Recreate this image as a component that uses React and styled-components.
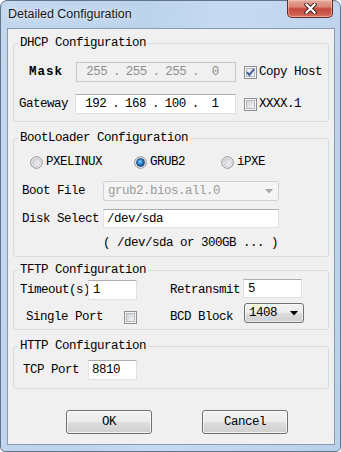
import styled, { createGlobalStyle } from 'styled-components'

const Global = createGlobalStyle`
  html, body { margin:0; padding:0; background:#ffffff; }
  body { width:341px; height:452px; overflow:hidden; }
  * { box-sizing:border-box; }
`

const mono = `font-family:"Liberation Mono","DejaVu Sans Mono",monospace;font-size:12.5px;letter-spacing:-0.5px;`

const Win = styled.div`
  width:341px;height:452px;
  display:flex;flex-direction:column;
  border:1px solid #62748c;
  border-radius:7px 7px 5px 5px;
  background:linear-gradient(100deg,#c3d8ef 0%,#bcd3ec 35%,#c6dbf1 55%,#b9d0ea 100%);
  padding:0 5px 6px 6px;
  color:#000;
`
const TitleBar = styled.div`
  height:27px;display:flex;justify-content:space-between;align-items:flex-start;
`
const TitleText = styled.div`
  font-family:"Liberation Sans",Arial,sans-serif;font-size:12.5px;color:#1a1a1a;
  line-height:27px;padding-left:1px;
  text-shadow:0 0 6px rgba(255,255,255,0.9);
`
const CloseBtn = styled.div`
  width:46px;height:18px;margin-top:-1px;margin-right:2px;
  border:1px solid #6a2a22;border-top:none;
  border-radius:0 0 5px 5px;
  background:linear-gradient(#e7a99c 0%,#d98576 40%,#c34a3c 52%,#cb5a4b 80%,#d7776a 100%);
  box-shadow:inset 0 0 0 1px rgba(255,220,210,0.45);
  display:flex;align-items:center;justify-content:center;
`
const Client = styled.div`
  flex:1;display:flex;flex-direction:column;
  background:#f0f0f0;border:1px solid #8a9bb1;
  padding:7px 5px 0 5px;
`
const Group = styled.fieldset`
  margin:${p => p.$mt || 0}px 0 0 0;
  padding:${p => p.$pt}px 0 ${p => p.$pb}px 0;
  border:1px solid #d5dce3;border-radius:3px;
  min-width:0;
  display:flex;flex-direction:column;
`
const Legend = styled.legend`
  ${mono}
  line-height:14px;padding:0 2px;margin-left:4px;
`
const Row = styled.div`
  display:flex;align-items:center;
  height:${p => p.$h || 20}px;
  margin-top:${p => p.$mt || 0}px;
  padding-left:${p => p.$pl || 0}px;
`
const Label = styled.div`
  ${mono}
  width:${p => p.$w}px;flex:none;
  padding-left:${p => p.$pl || 0}px;
  white-space:nowrap;
  margin-top:${p => p.$dy || 0}px;
  ${p => p.$bold && 'font-weight:bold;letter-spacing:1px;'}
`
const Field = styled.div`
  ${mono}
  width:${p => p.$w}px;height:${p => p.$h || 20}px;flex:none;
  display:flex;align-items:center;
  padding-left:${p => p.$pl || 4}px;
  background:${p => p.$off ? '#f0f0f0' : '#ffffff'};
  color:${p => p.$off ? '#8e8e8e' : '#000'};
  border:1px solid ${p => p.$off ? '#cacaca' : '#dde1e7'};
  border-top-color:${p => p.$off ? '#c2c2c2' : '#abadb3'};
  border-left-color:${p => p.$off ? '#c6c6c6' : '#e2e3ea'};
  margin-right:${p => p.$mr || 0}px;
`
const IpBox = styled(Field)`
  display:grid;grid-template-columns:1fr 0 1fr 0 1fr 0 1fr;padding-left:0;
`
const Octet = styled.span`text-align:center;`
const Dot = styled.span`display:flex;justify-content:center;width:0;`
const Combo = styled.div`
  ${mono}
  width:${p => p.$w}px;height:20px;flex:none;
  display:flex;align-items:center;justify-content:space-between;
  padding:0 5px 0 4px;
  border-radius:3px;
  ${p => p.$off
    ? 'background:#f4f4f4;border:1px solid #d0d0d0;color:#9b9b9b;'
    : 'background:linear-gradient(#f2f2f2 0%,#ebebeb 48%,#dddddd 52%,#cfcfcf 100%);border:1px solid #707070;color:#000;box-shadow:inset 0 0 0 1px rgba(255,255,255,0.6);'}
  margin-top:${p => p.$mt || 0}px;
  align-self:${p => p.$self || 'auto'};
`
const CheckWrap = styled.label`
  ${mono}
  display:flex;align-items:center;gap:2px;
  margin-right:${p => p.$mr || 0}px;
`
const RadioItem = styled.label`
  ${mono}
  display:flex;align-items:center;gap:3px;
  width:${p => p.$w ? p.$w + 'px' : 'auto'};
`
const Hint = styled.div`
  ${mono}
  line-height:14px;
  padding-left:${p => p.$pl}px;
  margin-top:${p => p.$mt}px;
`
const Buttons = styled.div`
  display:flex;gap:50px;padding-left:53px;margin-top:21px;
`
const Button = styled.div`
  ${mono}
  width:86px;height:24px;
  display:flex;align-items:center;justify-content:center;
  border:1px solid #707070;border-radius:3px;
  background:linear-gradient(#f2f2f2 0%,#ebebeb 48%,#dddddd 52%,#cfcfcf 100%);
  box-shadow:inset 0 0 0 1px rgba(255,255,255,0.7);
`

function Check({ on }) {
  return (
    <svg width="13" height="13" viewBox="0 0 13 13">
      <defs>
        <linearGradient id="cbg" x1="0" y1="0" x2="1" y2="1">
          <stop offset="0" stopColor="#cbcfd5" />
          <stop offset="1" stopColor="#f7f7f7" />
        </linearGradient>
      </defs>
      <rect x="0.5" y="0.5" width="12" height="12" fill="#f4f4f4" stroke="#8f8f8f" />
      <rect x="2.5" y="2.5" width="8" height="8" fill={on ? '#eef0f3' : 'url(#cbg)'} stroke="#b4b8be" />
      {on && <path d="M3 6.2 L5.4 9 L10 3" fill="none" stroke="#3d5a9c" strokeWidth="2" />}
    </svg>
  )
}

function Radio({ on }) {
  return (
    <svg width="13" height="13" viewBox="0 0 13 13">
      <defs>
        <linearGradient id="rbg" x1="0" y1="0" x2="1" y2="1">
          <stop offset="0" stopColor="#c9ccd1" />
          <stop offset="1" stopColor="#fbfbfb" />
        </linearGradient>
        <radialGradient id="rsel" cx="0.45" cy="0.4" r="0.6">
          <stop offset="0" stopColor="#8fd9fb" />
          <stop offset="0.5" stopColor="#2a86d0" />
          <stop offset="1" stopColor="#0d3f80" />
        </radialGradient>
      </defs>
      <circle cx="6.5" cy="6.5" r="5.8" fill="#f4f4f4" stroke="#8e8f8f" strokeWidth="1" />
      <circle cx="6.5" cy="6.5" r="4" fill={on ? 'url(#rsel)' : 'url(#rbg)'} stroke={on ? '#1a3e72' : '#c0c3c7'} strokeWidth="0.8" />
    </svg>
  )
}

function Arrow({ c }) {
  return (
    <svg width="8" height="5" viewBox="0 0 8 5">
      <path d="M0 0 H8 L4 4.5 Z" fill={c} />
    </svg>
  )
}

function Ip({ parts, off, w }) {
  return (
    <IpBox $w={w} $off={off}>
      <Octet>{parts[0]}</Octet><Dot>.</Dot>
      <Octet>{parts[1]}</Octet><Dot>.</Dot>
      <Octet>{parts[2]}</Octet><Dot>.</Dot>
      <Octet>{parts[3]}</Octet>
    </IpBox>
  )
}

export default function App() {
  return (
    <>
      <Global />
      <Win>
        <TitleBar>
          <TitleText>Detailed Configuration</TitleText>
          <CloseBtn>
            <svg width="13" height="11" viewBox="0 0 13 11">
              <path d="M2.5 1.5 L10.5 9.5 M10.5 1.5 L2.5 9.5" stroke="#3a1b17" strokeWidth="4" strokeLinecap="square" />
              <path d="M2.5 1.5 L10.5 9.5 M10.5 1.5 L2.5 9.5" stroke="#ffffff" strokeWidth="2.2" strokeLinecap="square" />
            </svg>
          </CloseBtn>
        </TitleBar>
        <Client>
          <Group $pt={12} $pb={7}>
            <Legend>DHCP Configuration</Legend>
            <Row>
              <Label $w={62} $pl={15} $bold>Mask</Label>
              <Ip w={160} off parts={['255', '255', '255', '0']} />
              <CheckWrap style={{ marginLeft: 8 }}><Check on />Copy Host</CheckWrap>
            </Row>
            <Row $mt={12}>
              <Label $w={61} $pl={5}>Gateway</Label>
              <Ip w={161} parts={['192', '168', '100', '1']} />
              <CheckWrap style={{ marginLeft: 8 }}><Check />XXXX.1</CheckWrap>
            </Row>
          </Group>

          <Group $mt={9} $pt={9} $pb={6}>
            <Legend>BootLoader Configuration</Legend>
            <Row $h={16} $pl={16}>
              <RadioItem $w={104}><Radio />PXELINUX</RadioItem>
              <RadioItem $w={87}><Radio on />GRUB2</RadioItem>
              <RadioItem><Radio />iPXE</RadioItem>
            </Row>
            <Row $mt={11}>
              <Label $w={89} $pl={8}>Boot File</Label>
              <Combo $w={176} $off>grub2.bios.all.0<Arrow c="#a8a8a8" /></Combo>
            </Row>
            <Row $mt={8} $h={19}>
              <Label $w={89} $pl={8}>Disk Select</Label>
              <Field $w={176} $h={19} $pl={3}>/dev/sda</Field>
            </Row>
            <Hint $pl={89} $mt={8}>( /dev/sda or 300GB ... )</Hint>
          </Group>

          <Group $mt={6} $pt={3} $pb={3}>
            <Legend>TFTP Configuration</Legend>
            <Row>
              <Label $w={74} $pl={6}>Timeout(s)</Label>
              <Field $w={49} $mr={33}>1</Field>
              <Label $w={73}>Retransmit</Label>
              <Field $w={59} $h={19} style={{ marginTop: -3 }}>5</Field>
            </Row>
            <Row $mt={6}>
              <Label $w={110} $pl={12} $dy={2}>Single Port</Label>
              <CheckWrap $mr={33} style={{ marginTop: 2 }}><Check /></CheckWrap>
              <Label $w={74} $dy={2}>BCD Block</Label>
              <Combo $w={60} $mt={-6}>1408<Arrow c="#000" /></Combo>
            </Row>
          </Group>

          <Group $mt={9} $pt={7} $pb={8}>
            <Legend>HTTP Configuration</Legend>
            <Row>
              <Label $w={74} $pl={9}>TCP Port</Label>
              <Field $w={49} $pl={3}>8810</Field>
            </Row>
          </Group>

          <Buttons>
            <Button>OK</Button>
            <Button>Cancel</Button>
          </Buttons>
        </Client>
      </Win>
    </>
  )
}
